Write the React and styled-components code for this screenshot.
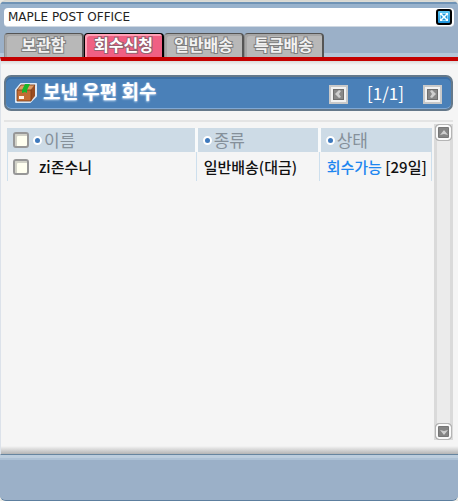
import React, { useState } from 'react'
import styled, { createGlobalStyle } from 'styled-components'

const GlobalStyle = createGlobalStyle`
* {
    box-sizing: border-box;
}
body {
    background: #e9e9e4;
    font-family: "Noto Sans CJK KR", "Noto Sans", sans-serif;
    margin: 0;
}
button, input {
    font-family: inherit;
    margin: 0;
}
`

const Window = styled.div`
background: #9bb0c8;
border-bottom: 1px solid #5d7f9f;
border-radius: 6px;
border-top: 1px solid #d8d8d2;
display: flex;
flex-direction: column;
min-height: 100vh;
overflow: hidden;
`

const TopBar = styled.header`
background: linear-gradient(#dcdcd6 0 1px, #6f93b5 1px 3px, #98b2cc 3px 7px, #9bb0c8 7px 52px, #b4c6d8 52px);
padding: 7px 4px 0;
`

const TitleBar = styled.div`
align-items: center;
background: #fff;
border-bottom: 1px solid #cfd8e2;
border-radius: 4px;
display: flex;
height: 19px;
justify-content: space-between;
padding: 0 2px 0 4px;
`

const Title = styled.h1`
color: #222;
font: 400 12px/16px "DejaVu Sans", sans-serif;
margin: 0;
`

const CloseButton = styled.button`
background: linear-gradient(#5cc8f4, #1e93dc);
border: 2px solid #000;
border-radius: 3px;
display: block;
height: 16px;
padding: 0;
width: 16px;

svg {
    display: block;
    margin: 1px;
}
`

const Tabs = styled.nav`
display: flex;
height: 24px;
margin-top: 6px;
`

const Tab = styled.button`
background: ${p => p.$active ? '#f06083' : '#b8b8b8'};
border: 1px solid ${p => p.$active ? '#000' : '#555'};
border-bottom: 0;
border-left-color: ${p => p.$active ? '#000' : '#8c8c8c'};
border-radius: 4px 4px 0 0;
border-right-width: 2px;
box-shadow: inset 2px 2px ${p => p.$active ? '#ffa0b5' : '#a6a6a6'};
color: ${p => p.$active ? '#fff' : '#f2f2f2'};
font-size: 16px;
font-weight: 700;
line-height: 20px;
padding: 0 0 3px;
paint-order: stroke fill;
-webkit-text-stroke: 2px ${p => p.$active ? '#94606e' : '#7d7d7d'};
width: 80px;
`

const Body = styled.main`
background: linear-gradient(#dadada, #f5f5f5 4px, #f5f5f5 calc(100% - 8px), #b4b4b4);
border-bottom: 1px solid #67859f;
border-left: 1px solid #dce2ea;
border-top: 4px solid #c40000;
display: flex;
flex: 1;
flex-direction: column;
padding: 14px 5px 14px 3px;
`

const Heading = styled.section`
align-items: center;
background: #4a80b8;
border: 2px solid #64788a;
border-radius: 7px;
box-shadow: inset 0 2px #3c6ea5, inset 0 -1px #80a8d4;
display: flex;
height: 36px;
padding: 0 9px 0 8px;
`

const HeadingText = styled.h2`
color: #fff;
flex: 1;
font-size: 19px;
font-weight: 700;
line-height: 28px;
margin: 0 0 4px 5px;
text-shadow: 0 1px 2px #d5e6fa;
`

const Pager = styled.div`
align-items: center;
color: #fff;
display: flex;
font-size: 17px;
gap: 19px;
line-height: 24px;
padding-top: 2px;
`

const PageCount = styled.span`
padding-bottom: 2px;
`

const ArrowButton = styled.button`
background: #888;
border: 2px solid #c9c9c9;
box-shadow: inset 0 0 0 2px #f2f2f2, inset 0 0 0 3px #6e6e6e;
display: block;
height: 19px;
padding: 0;
width: 19px;

svg {
    display: block;
    margin: 0 auto;
}
`

const Content = styled.section`
border-top: 2px solid #e4e4e4;
display: flex;
flex: 1;
margin-top: 9px;
padding: 2px 0 0 3px;
`

const ListArea = styled.div`
flex: 1;
padding-top: 4px;
`

const Table = styled.table`
border-collapse: collapse;
table-layout: fixed;
width: 100%;
`

const HeadCell = styled.th`
background: #cddbe6;
border-left: ${p => p.$first ? '1px solid #cddbe6' : '3px solid #f8fafb'};
color: #85909a;
font-size: 17px;
font-weight: 400;
height: 24px;
line-height: 24px;
padding: 0 0 0 5px;
text-align: left;
width: ${p => p.$width};
`

const Cell = styled.td`
border-left: 1px solid #cddfed;
color: #111;
font-size: 15px;
font-weight: 500;
height: 29px;
line-height: 28px;
padding: 0 0 0 ${p => p.$first ? 5 : 7}px;
white-space: nowrap;

&:last-child {
    border-right: 1px solid #cddfed;
}
`

const CellRow = styled.div`
align-items: center;
display: flex;
gap: ${p => p.$gap || 0}px;
`

const Label = styled.label`
display: inline-block;
`

const Check = styled.input`
appearance: none;
background: ${p => p.checked ? '#aebb76' : '#fffff0'};
border: 2px solid #979797;
border-radius: 3px;
box-shadow: inset 2px 2px #d2d2c8;
flex: none;
height: 16px;
width: 16px;
`

const Dot = styled.span`
background: #3e79bd;
border: 2px solid #fff;
border-radius: 50%;
display: block;
flex: none;
height: 9px;
margin-right: 2px;
width: 9px;
`

const Status = styled.span`
color: #1e86f0;
`

const Scrollbar = styled.div`
background: #ebebeb;
border: solid #dadada;
border-width: 0 3px;
display: flex;
flex-direction: column;
justify-content: space-between;
margin-left: 2px;
width: 19px;
`

const ScrollButton = styled.button`
background: #858585;
border: 1px solid #b5b5b5;
border-radius: 4px;
box-shadow: inset 0 0 0 2px #fafafa, inset 0 0 0 3px #777;
height: 17px;
margin: 0 -2px;
padding: 0;
width: 17px;

svg {
    display: block;
    margin: 0 auto;
}
`

const Footer = styled.footer`
background: linear-gradient(#bccddd 0 3px, #adc1d5 3px 5px, #9bb0c8 5px);
height: 45px;
`

const PATHS = {
    left: 'M2 5 6 1 8 2 6 5 8 8 6 9z',
    right: 'M8 5 4 1 2 2 4 5 2 8 4 9z',
    up: 'M1 7 5 2l4 5-4-1z',
    down: 'M1 3l4 1 4-1-4 5z',
}

const Arrow = ({ to }) => (
    <svg width="10" height="10" viewBox="0 0 10 10" fill="#cfcfcf">
        <path d={PATHS[to]} />
    </svg>
)

const Cross = () => (
    <svg width="10" height="10" viewBox="0 0 10 10">
        <path d="M1 1h8v8H1z" fill="#8fd8f6" />
        <path d="M1 1h2v2H1zM7 1h2v2H7zM3 3h1v1H3zM6 3h1v1H6zM4 4h2v2H4zM3 6h1v1H3zM6 6h1v1H6zM1 7h2v2H1zM7 7h2v2H7z" fill="#fff" />
        <path d="M4 2h2v1H4zM2 4h1v2H2zM7 4h1v2H7zM4 7h2v1H4z" fill="#2590d4" />
    </svg>
)

const Parcel = () => (
    <svg width="24" height="22" viewBox="0 0 24 22">
        <path d="M7 2h15v12l-6 6H2V8z" fill="#fff" stroke="#dce7f3" strokeWidth="2" strokeLinejoin="round" />
        <path d="M7 3h14l-4 5H3z" fill="#e09a62" />
        <path d="M3 8h14v11H3z" fill="#c46c34" />
        <path d="m17 8 4-5v11l-4 5z" fill="#9a4c20" />
        <path d="M3 8h14v11H3zM3 8l4-5h14l-4 5" fill="none" stroke="#7a3c18" strokeWidth=".8" />
        <path d="M11 2h5l-3 6v3l-2-1-3 1V8z" fill="#18b52a" />
        <path d="M5 14h5v3H5z" fill="#fff2e5" />
    </svg>
)

const tabs = ['보관함', '회수신청', '일반배송', '특급배송']

const mails = [
    { id: 1, name: 'zi존수니', kind: '일반배송(대금)', status: '회수가능', left: '[29일]' },
]

export default () => {
    const [active, setActive] = useState('회수신청')
    const [picked, setPicked] = useState([])
    const all = picked.length === mails.length

    const toggle = id => setPicked(
        picked.includes(id) ? picked.filter(x => x !== id) : [...picked, id]
    )

    return (
        <Window>
            <GlobalStyle />
            <TopBar>
                <TitleBar>
                    <Title>MAPLE POST OFFICE</Title>
                    <CloseButton aria-label="닫기"><Cross /></CloseButton>
                </TitleBar>
                <Tabs>
                    {tabs.map(tab => (
                        <Tab key={tab} $active={tab === active} onClick={() => setActive(tab)}>{tab}</Tab>
                    ))}
                </Tabs>
            </TopBar>
            <Body>
                <Heading>
                    <Parcel />
                    <HeadingText>보낸 우편 회수</HeadingText>
                    <Pager>
                        <ArrowButton aria-label="이전"><Arrow to="left" /></ArrowButton>
                        <PageCount>[1/1]</PageCount>
                        <ArrowButton aria-label="다음"><Arrow to="right" /></ArrowButton>
                    </Pager>
                </Heading>
                <Content>
                    <ListArea>
                        <Table>
                            <thead>
                                <tr>
                                    <HeadCell $first $width="44.5%">
                                        <CellRow $gap={4}>
                                            <Check
                                                type="checkbox"
                                                aria-label="전체 선택"
                                                checked={all}
                                                onChange={() => setPicked(all ? [] : mails.map(m => m.id))}
                                            />
                                            <CellRow><Dot />이름</CellRow>
                                        </CellRow>
                                    </HeadCell>
                                    <HeadCell $width="29%"><CellRow><Dot />종류</CellRow></HeadCell>
                                    <HeadCell><CellRow><Dot />상태</CellRow></HeadCell>
                                </tr>
                            </thead>
                            <tbody>
                                {mails.map(m => (
                                    <tr key={m.id}>
                                        <Cell $first>
                                            <CellRow $gap={10}>
                                                <Check
                                                    type="checkbox"
                                                    id={`mail-${m.id}`}
                                                    checked={picked.includes(m.id)}
                                                    onChange={() => toggle(m.id)}
                                                />
                                                <Label htmlFor={`mail-${m.id}`}>{m.name}</Label>
                                            </CellRow>
                                        </Cell>
                                        <Cell>{m.kind}</Cell>
                                        <Cell><Status>{m.status}</Status> {m.left}</Cell>
                                    </tr>
                                ))}
                            </tbody>
                        </Table>
                    </ListArea>
                    <Scrollbar>
                        <ScrollButton aria-label="위로"><Arrow to="up" /></ScrollButton>
                        <ScrollButton aria-label="아래로"><Arrow to="down" /></ScrollButton>
                    </Scrollbar>
                </Content>
            </Body>
            <Footer />
        </Window>
    )
}
